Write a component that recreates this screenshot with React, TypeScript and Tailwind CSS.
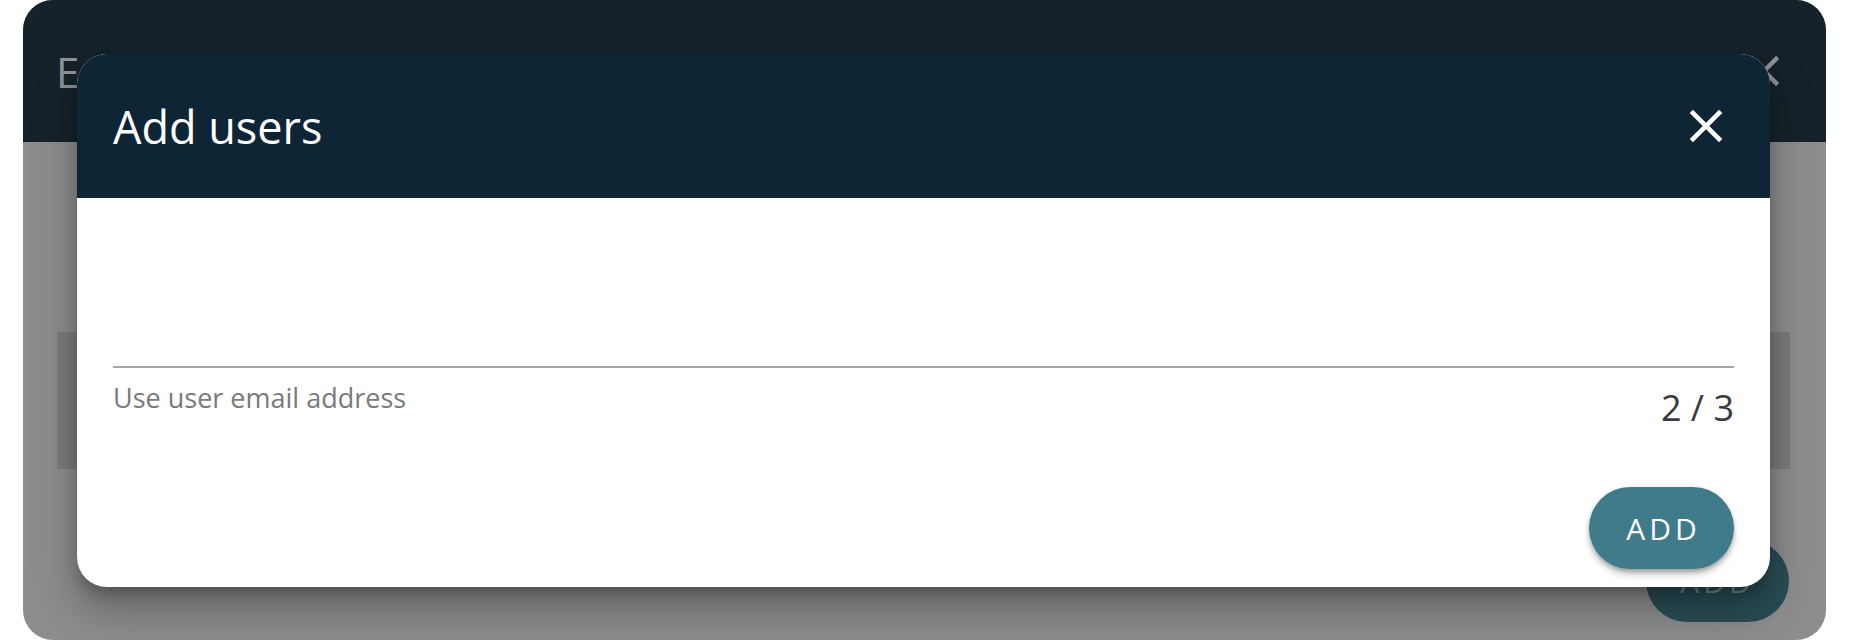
import React from "react";

const FONT = { fontFamily: '"Open Sans", "Noto Sans", sans-serif' };

function CloseIcon({ className }: { className?: string }) {
  return (
    <svg viewBox="0 0 24 24" className={className} fill="currentColor" aria-hidden>
      <path d="M19 6.41 17.59 5 12 10.59 6.41 5 5 6.41 10.59 12 5 17.59 6.41 19 12 13.41 17.59 19 19 17.59 13.41 12z" />
    </svg>
  );
}

export default function App() {
  return (
    <div className="w-[1856px] h-[641px] bg-white pl-[23px] overflow-hidden" style={FONT}>
      {/* dimmed parent dialog */}
      <div className="relative w-[1803px] h-[640px] rounded-[30px] overflow-hidden bg-[#8d8d8d] flex flex-col">
        <div className="h-[142px] shrink-0 bg-[#16222a] flex items-center justify-between pl-[33px] pr-[36px]">
          <span className="text-[42px] text-[#8f9397]">Edit group</span>
          <CloseIcon className="w-[52px] h-[52px] text-[#8f9397]" />
        </div>
        <div className="flex flex-col pl-[34px] pr-[36px] pt-[190px]">
          <div className="h-[137px] bg-[#7c7c7c]" />
          <div className="flex justify-end mt-[71px] pr-px">
            <div className="w-[143px] h-[82px] rounded-full bg-[#2a4d55] flex items-center justify-center text-[30px] font-medium tracking-[4px] text-[#6f8a90]">
              ADD
            </div>
          </div>
        </div>

        {/* active dialog */}
        <div className="absolute left-[54px] top-[54px] w-[1693px] h-[533px] rounded-[30px] overflow-hidden bg-white flex flex-col shadow-[0_22px_40px_6px_rgba(0,0,0,0.22),0_10px_18px_-4px_rgba(0,0,0,0.3)]">
          <div className="h-[144px] shrink-0 bg-[#0e2536] flex items-center justify-between pl-[36px] pr-[36px]">
            <h2 className="text-[45px] text-white leading-none">Add users</h2>
            <button aria-label="Close" className="text-white">
              <CloseIcon className="w-[56px] h-[56px]" />
            </button>
          </div>
          <div className="flex-1 flex flex-col px-[36px]">
            <input className="h-[168px] w-full bg-transparent outline-none text-[30px] text-[#222]" aria-label="Email" />
            <div className="h-[2px] bg-[#a6a6a6]" />
            <div className="flex justify-between items-start mt-[12px]">
              <span className="text-[27px] leading-[36px] text-[#7a7a7a]">Use user email address</span>
              <span className="text-[36px] leading-[50px] text-[#3a3a3a] mt-[3px]">2 / 3</span>
            </div>
            <div className="flex justify-end mt-[54px]">
              <button className="w-[145px] h-[82px] rounded-full bg-[#407b8b] text-white text-[30px] font-medium tracking-[4px] pl-[4px] shadow-[0_6px_8px_-2px_rgba(0,0,0,0.3),0_2px_4px_rgba(0,0,0,0.2)]">
                ADD
              </button>
            </div>
          </div>
        </div>
      </div>
    </div>
  );
}
